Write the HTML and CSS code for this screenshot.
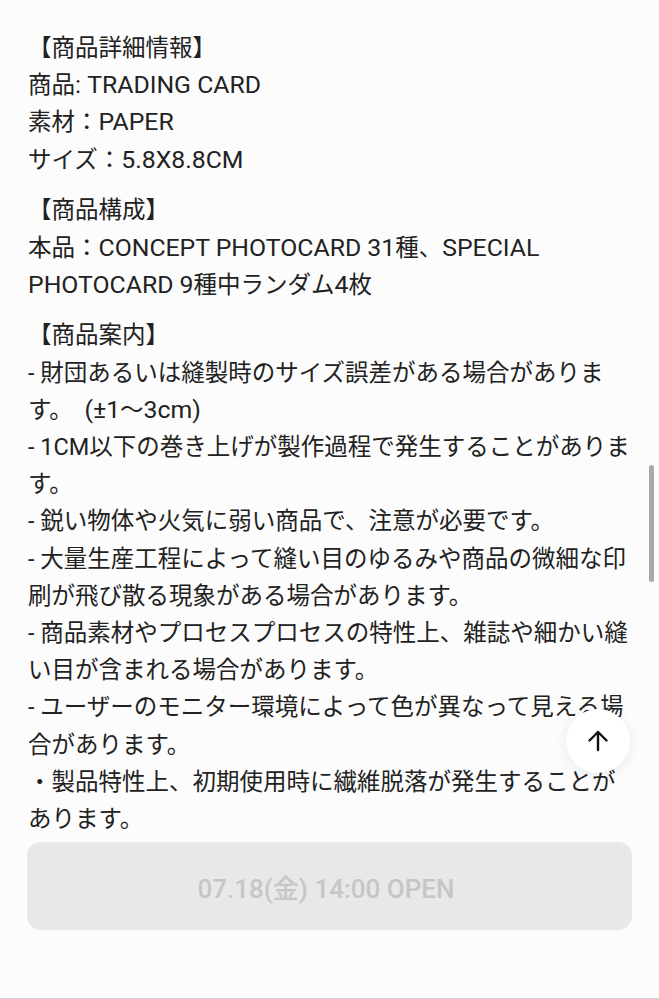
FILE: index.html
```html
<!DOCTYPE html>
<html lang="ja">
<head>
<meta charset="utf-8">
<title>商品詳細</title>
<link rel="stylesheet" href="styles.css">
</head>
<body>
<div class="page">
  <main class="detail">
    <p class="block">【商品詳細情報】<br>商品<span class="lat">: TRADING CARD</span><br>素材：<span class="lat">PAPER</span><br>サイズ：<span class="lat">5.8X8.8CM</span></p>
    <p class="block">【商品構成】<br>本品：<span class="lat">CONCEPT PHOTOCARD 31</span>種、<span class="lat">SPECIAL PHOTOCARD 9</span>種中ランダム<span class="lat">4</span>枚</p>
    <p class="block">【商品案内】<br>- 財団あるいは縫製時のサイズ誤差がある場合があります。　<span class="lat">(±1</span>〜<span class="lat">3cm)</span><br>- 1CM以下の巻き上げが製作過程で発生することがあります。<br>- 鋭い物体や火気に弱い商品で、注意が必要です。<br>- 大量生産工程によって縫い目のゆるみや商品の微細な印刷が飛び散る現象がある場合があります。<br>- 商品素材やプロセスプロセスの特性上、雑誌や細かい縫い目が含まれる場合があります。<br>- ユーザーのモニター環境によって色が異なって見える場合があります。<br>・製品特性上、初期使用時に繊維脱落が発生することがあります。</p>
  </main>
  <footer class="footer">
    <button class="open-btn" type="button">07.18(金) 14:00 OPEN</button>
  </footer>
  <button class="to-top" type="button" aria-label="ページの先頭へ">
    <svg width="26" height="26" viewBox="0 0 26 26" fill="none" stroke="#111" stroke-width="2.4" stroke-linecap="round" stroke-linejoin="round"><path d="M13 22V4.5"/><path d="M4.5 12.5L13 4l8.5 8.5"/></svg>
  </button>
  <div class="scrollbar"></div>
</div>
</body>
</html>
```

FILE: styles.css
```css
html, body {
  margin: 0;
  padding: 0;
  background: #fcfcfc;
}

.page {
  position: relative;
  height: 999px;
  box-sizing: border-box;
  border-bottom: 1px solid #d2d2d2;
  display: flex;
  flex-direction: column;
  overflow: hidden;
  font-family: Roboto, "Noto Sans CJK JP", sans-serif;
  color: #222;
}

.detail {
  padding: 30px 28px 0 28px;
}

.block {
  margin: 0 0 13.5px 0;
  font-size: 23.5px;
  line-height: 37.2px;
  line-break: strict;
}

.block:last-child {
  margin-bottom: 0;
}

.lat {
  font-size: 24.8px;
  line-height: 36.4px;
}

.footer {
  padding: 4px 27px 0 27px;
}

.open-btn {
  display: block;
  width: 100%;
  height: 88px;
  border: none;
  border-radius: 14px;
  background: #e8e8e8;
  color: #c6c6c6;
  font-family: Roboto, "Noto Sans CJK JP", sans-serif;
  font-size: 26px;
  font-weight: 500;
  padding: 0 7px 0 0;
}

.to-top {
  position: absolute;
  left: 566px;
  top: 709px;
  width: 64px;
  height: 64px;
  border-radius: 50%;
  border: none;
  background: #ffffff;
  box-shadow: 0 2px 14px rgba(0, 0, 0, 0.08);
  display: flex;
  align-items: center;
  justify-content: center;
  padding: 0;
}

.scrollbar {
  position: absolute;
  left: 649px;
  top: 465px;
  width: 5px;
  height: 117px;
  border-radius: 3px;
  background: #a9a9a9;
}
```
